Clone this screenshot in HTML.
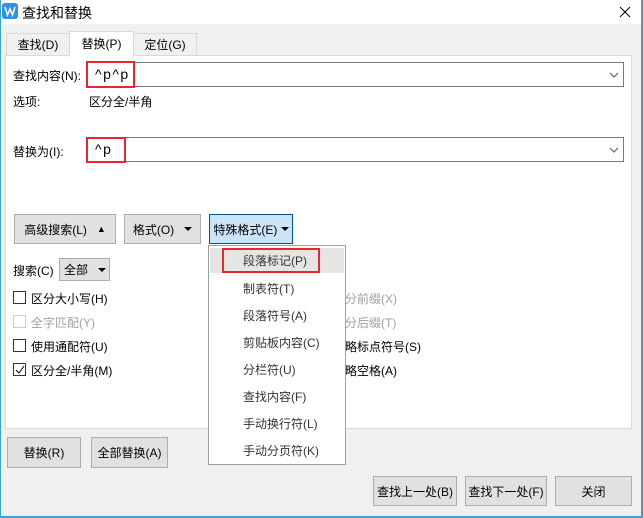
<!DOCTYPE html>
<html><head><meta charset="utf-8"><style>
*{box-sizing:border-box;margin:0;padding:0}
body{width:643px;height:518px;overflow:hidden;background:#f0f0f0;font-family:"Liberation Sans","Noto Sans CJK SC",sans-serif;font-size:12px;color:#000;position:relative}
.a{position:absolute;white-space:nowrap}
.btn{position:absolute;background:#e1e1e1;border:1px solid #adadad;display:flex;align-items:center;justify-content:center}
.inp{position:absolute;background:#fff;border:1px solid #7a7a7a}
.cb{position:absolute;width:13px;height:13px;border:1px solid #333;background:#fff}
.gray{color:#a0a0a0}
.red{position:absolute;border:2px solid #e8262c}
.tri{display:inline-block;width:0;height:0;border-left:4px solid transparent;border-right:4px solid transparent;border-top:4px solid #000}
</style></head><body>
<div class="a" style="left:0;top:0;width:643px;height:24px;background:#fff"></div>
<div class="a" style="left:641px;top:0;width:2px;height:518px;background:#3fa3c9"></div>
<div class="a" style="left:0;top:516px;width:643px;height:2px;background:#3fa3c9"></div>
<div class="a" style="left:0;top:0;width:1px;height:518px;background:#3fa3c9"></div>
<svg class="a" style="left:2px;top:3px" width="16" height="16"><rect width="16" height="16" rx="3" fill="#2f8ef0"/><path d="M3 4 L5.5 12 L8 6 L10.5 12 L13 4" stroke="#fff" stroke-width="1.6" fill="none"/></svg>
<div class="a" style="left:22px;top:3px;font-size:14px">查找和替换</div>
<svg class="a" style="left:619px;top:6px" width="12" height="12"><path d="M1 1L11 11M11 1L1 11" stroke="#000" stroke-width="1"/></svg>

<div class="a" style="left:6px;top:33px;width:64px;height:23px;border:1px solid #d9d9d9;border-bottom:none;background:#f0f0f0;text-align:center;line-height:22px">查找(D)</div>
<div class="a" style="left:133px;top:33px;width:64px;height:23px;border:1px solid #d9d9d9;border-bottom:none;background:#f0f0f0;text-align:center;line-height:22px">定位(G)</div>
<div class="a" style="left:5px;top:55px;width:627px;height:374px;background:#fff;border:1px solid #d9d9d9"></div>
<div class="a" style="left:69px;top:31px;width:65px;height:26px;border:1px solid #d9d9d9;border-bottom:none;background:#fff;text-align:center;line-height:24px">替换(P)</div>

<div class="a" style="left:13px;top:67px">查找内容(N):</div>
<div class="inp" style="left:87px;top:62px;width:537px;height:25px"></div>
<svg class="a" style="left:609px;top:72px" width="10" height="6"><path d="M1 1L5 5L9 1" stroke="#555" fill="none"/></svg>
<div class="a" style="left:95px;top:66px;font-size:14px;letter-spacing:1.5px">^p^p</div>
<div class="red" style="left:86px;top:61px;width:49px;height:27px"></div>
<div class="a" style="left:13px;top:93px">选项:</div>
<div class="a" style="left:89px;top:93px">区分全/半角</div>

<div class="a" style="left:13px;top:143px">替换为(I):</div>
<div class="inp" style="left:87px;top:137px;width:537px;height:25px"></div>
<svg class="a" style="left:609px;top:147px" width="10" height="6"><path d="M1 1L5 5L9 1" stroke="#555" fill="none"/></svg>
<div class="a" style="left:95px;top:141px;font-size:14px;letter-spacing:1.5px">^p</div>
<div class="red" style="left:86px;top:137px;width:40px;height:26px"></div>

<div class="btn" style="left:14px;top:214px;width:102px;height:30px">高级搜索(L)&nbsp;&nbsp;&nbsp;<span style="font-size:9px">▲</span></div>
<div class="btn" style="left:124px;top:214px;width:77px;height:30px">格式(O)&nbsp;&nbsp;&nbsp;<span class="tri"></span></div>
<div class="btn" style="left:209px;top:214px;width:84px;height:30px;background:#cce4f7;border-color:#005499">特殊格式(E)&nbsp;<span class="tri"></span></div>

<div class="a" style="left:13px;top:262px">搜索(C)</div>
<div class="btn" style="left:59px;top:258px;width:51px;height:23px;justify-content:flex-start;padding-left:4px">全部&nbsp;&nbsp;&nbsp;<span class="tri"></span></div>

<div class="cb" style="left:13px;top:291px"></div><div class="a" style="left:31px;top:290px">区分大小写(H)</div>
<div class="cb" style="left:13px;top:315px;border-color:#ccc"></div><div class="a gray" style="left:31px;top:314px">全字匹配(Y)</div>
<div class="cb" style="left:13px;top:339px"></div><div class="a" style="left:31px;top:338px">使用通配符(U)</div>
<div class="cb" style="left:13px;top:363px"></div><svg class="a" style="left:15px;top:365px" width="10" height="10"><path d="M1 5L4 8L9 1" stroke="#000" fill="none"/></svg><div class="a" style="left:31px;top:362px">区分全/半角(M)</div>

<div class="a gray" style="left:333px;top:290px">区分前缀(X)</div>
<div class="a gray" style="left:333px;top:314px">区分后缀(T)</div>
<div class="a" style="left:333px;top:338px">忽略标点符号(S)</div>
<div class="a" style="left:333px;top:362px">忽略空格(A)</div>

<div class="a" style="left:208px;top:245px;width:138px;height:220px;background:#fff;border:1px solid #a0a0a0"></div>
<div class="a" style="left:210px;top:248px;width:134px;height:25px;background:#e5e5e5"></div>
<div class="red" style="left:222px;top:248px;width:98px;height:25px"></div>
<div class="a" style="left:243px;top:252px;color:#333">段落标记(P)</div>
<div class="a" style="left:243px;top:280px;color:#333">制表符(T)</div>
<div class="a" style="left:243px;top:307px;color:#333">段落符号(A)</div>
<div class="a" style="left:243px;top:334px;color:#333">剪贴板内容(C)</div>
<div class="a" style="left:243px;top:361px;color:#333">分栏符(U)</div>
<div class="a" style="left:243px;top:388px;color:#333">查找内容(F)</div>
<div class="a" style="left:243px;top:415px;color:#333">手动换行符(L)</div>
<div class="a" style="left:243px;top:442px;color:#333">手动分页符(K)</div>

<div class="btn" style="left:7px;top:437px;width:74px;height:31px">替换(R)</div>
<div class="btn" style="left:91px;top:437px;width:77px;height:31px">全部替换(A)</div>
<div class="btn" style="left:373px;top:476px;width:84px;height:30px">查找上一处(B)</div>
<div class="btn" style="left:465px;top:476px;width:82px;height:30px">查找下一处(F)</div>
<div class="btn" style="left:555px;top:476px;width:77px;height:30px">关闭</div>
</body></html>
